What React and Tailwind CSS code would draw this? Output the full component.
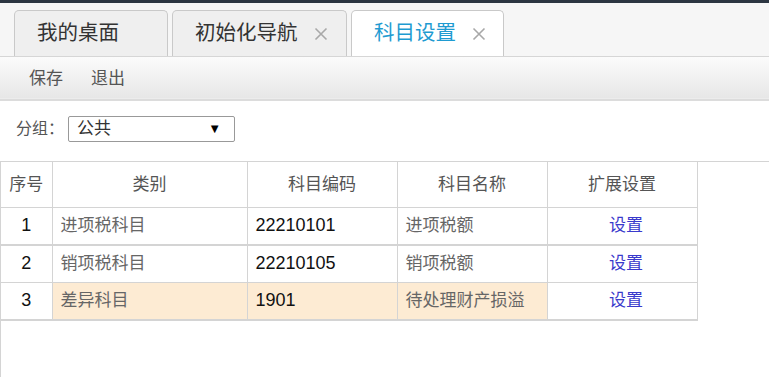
import React from 'react';

const font = { fontFamily: '"Liberation Sans", Arial, "Noto Sans CJK SC", sans-serif' };

const rows = [
    { no: 1, type: '进项税科目', code: '22210101', name: '进项税额', thick: true },
    { no: 2, type: '销项税科目', code: '22210105', name: '销项税额' },
    { no: 3, type: '差异科目', code: '1901', name: '待处理财产损溢', hl: true, thick: true },
];

const Close = () => (
    <svg width="14" height="14" viewBox="0 0 14 14" className="ml-[16px]">
        <path d="M1.5 1.5L12.5 12.5M12.5 1.5L1.5 12.5" stroke="#a8a8a8" strokeWidth="1.6" fill="none" />
    </svg>
);

const Tab = ({ label, active, closable, w }) => (
    <div
        className={`flex items-center h-[46px] rounded-t-[5px] border border-b-0 border-[#c9c9c9] ${active ? 'bg-white text-[#1f9bd1]' : 'bg-[#efefef] text-[#333]'} ${w}`}
    >
        <span className="text-[20.5px] pl-[22px]">{label}</span>
        {closable && <Close />}
    </div>
);

export default function App() {
    return (
        <div className="w-[769px] h-[377px] overflow-hidden bg-white" style={font}>
            {/* top strip */}
            <div className="h-[3px] bg-[#2c3641]" />

            {/* tabs */}
            <div className="flex items-end gap-[4px] h-[54px] pl-[14px] bg-[#f6f6f6] border-b border-[#d6d6d6]">
                <Tab label="我的桌面" w="w-[154px]" />
                <Tab label="初始化导航" closable w="w-[175px]" />
                <Tab label="科目设置" closable active w="w-[153px]" />
            </div>

            {/* toolbar */}
            <div className="flex items-center gap-[28px] h-[41px] pl-[29px] pt-[3px] text-[17px] text-[#555] bg-gradient-to-b from-[#fbfbfb] to-[#e7e7e7]">
                <span>保存</span>
                <span>退出</span>
            </div>
            <div className="h-[3px] bg-[#dcdcdc] border-t border-[#ececec]" />

            {/* filter */}
            <div className="flex items-center h-[60px] pl-[16px] pb-[4px] text-[16px] text-[#555]">
                <span>分组：</span>
                <div className="ml-[4px] flex items-center justify-between w-[167px] h-[26px] border border-[#999] rounded-[2px] pl-[8px] pr-[13px] text-[17px] text-[#333]">
                    <span>公共</span>
                    <span className="text-[13px] text-black">▼</span>
                </div>
            </div>

            {/* grid */}
            <div className="border-t border-l border-[#d4d4d4] h-[216px]">
                <table className="border-collapse text-[17px]">
                    <thead>
                        <tr className="h-[45px] text-[#555]">
                            <th className="w-[51px] font-normal border-r border-b border-[#d4d4d4]">序号</th>
                            <th className="w-[195px] font-normal border-r border-b border-[#d4d4d4]">类别</th>
                            <th className="w-[150px] font-normal border-r border-b border-[#d4d4d4]">科目编码</th>
                            <th className="w-[150px] font-normal border-r border-b border-[#d4d4d4]">科目名称</th>
                            <th className="w-[150px] font-normal border-r border-b border-[#d4d4d4]">扩展设置</th>
                        </tr>
                    </thead>
                    <tbody>
                        {rows.map((r) => {
                            const b = r.thick ? 'border-b-2' : 'border-b';
                            const bg = r.hl ? 'bg-[#fdebd3]' : '';
                            return (
                                <tr key={r.no} className={r.thick ? 'h-[38px]' : 'h-[37px]'}>
                                    <td className={`text-center text-[18px] text-[#111] border-r border-[#d4d4d4] ${b}`}>{r.no}</td>
                                    <td className={`pl-[8px] text-[#666] border-r border-[#d4d4d4] ${b} ${bg}`}>{r.type}</td>
                                    <td className={`pl-[8px] text-[18px] text-[#111] border-r border-[#d4d4d4] ${b} ${bg}`}>{r.code}</td>
                                    <td className={`pl-[8px] text-[#666] border-r border-[#d4d4d4] ${b} ${bg}`}>{r.name}</td>
                                    <td className={`text-center pl-[8px] text-[#3a3acc] border-r border-[#d4d4d4] ${b}`}>设置</td>
                                </tr>
                            );
                        })}
                    </tbody>
                </table>
            </div>
        </div>
    );
}
